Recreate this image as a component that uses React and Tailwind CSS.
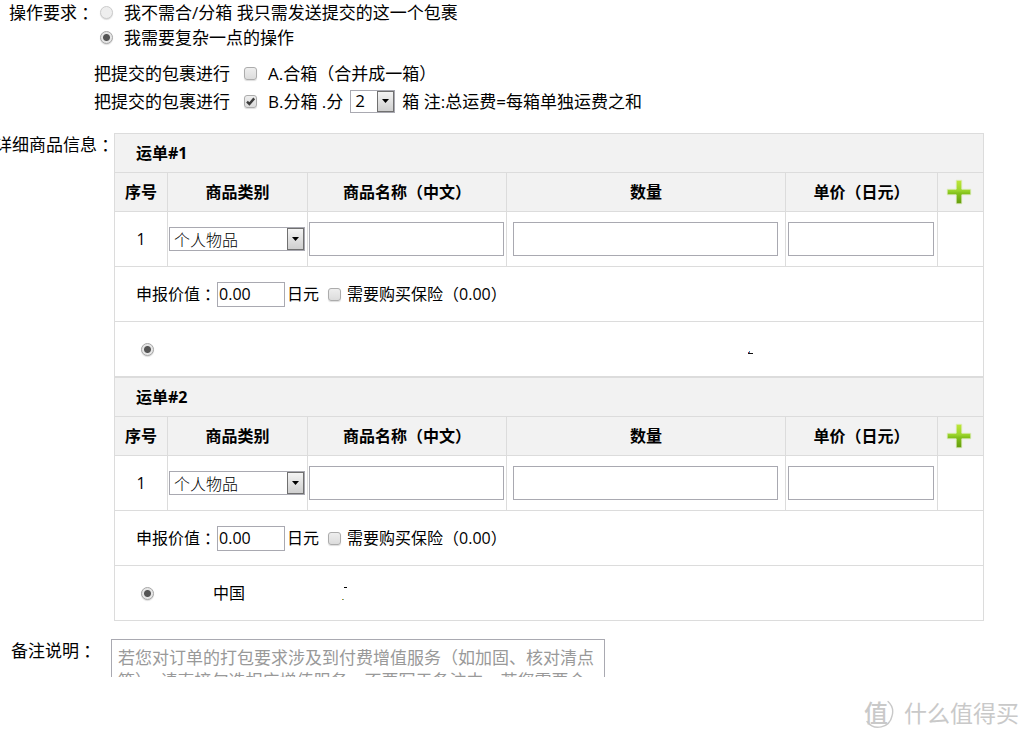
import { useState } from "react";

const inputClass =
  "border border-[#a9a9b1] bg-white outline-none focus:border-gray-500";

// full-width colon that sits in the middle of its box
function Colon() {
  return (
    <span className="inline-block align-top font-['Noto_Sans_CJK_TC',sans-serif]">
      ：
    </span>
  );
}

function Radio({ faded, ...props }) {
  return (
    <input
      type="radio"
      className={`size-[13px] shrink-0 appearance-none rounded-full border shadow-[0_1px_1px_#ddd] ${
        faded ? "border-[#ccc] bg-[#eee]" : "border-[#a8a8a8] bg-[#e6e6e6]"
      } checked:border-[#a8a8a8] checked:bg-[radial-gradient(circle,#555_0,#555_3px,#e6e6e6_4px)]`}
      {...props}
    />
  );
}

function Checkbox(props) {
  return (
    <span className="relative flex size-[13px] shrink-0">
      <input
        type="checkbox"
        className="peer size-[13px] appearance-none rounded-[3px] border border-[#acacac] bg-linear-to-b from-[#eee] to-[#dcdcdc] shadow-[0_1px_1px_#ddd]"
        {...props}
      />
      <svg
        viewBox="0 0 13 13"
        className="pointer-events-none absolute inset-0 hidden size-[13px] peer-checked:block"
      >
        <path
          d="M3 6.6 L5.4 9 L10.2 3.4"
          fill="none"
          stroke="#3c3c3c"
          strokeWidth="2.4"
        />
      </svg>
    </span>
  );
}

function Select({ wrapClass, className, options, ...props }) {
  return (
    <span className={`relative flex ${wrapClass}`}>
      <select
        className={`w-full appearance-none pl-1 leading-5 ${inputClass} ${className}`}
        {...props}
      >
        {options.map((o) => (
          <option key={o}>{o}</option>
        ))}
      </select>
      <span className="pointer-events-none absolute inset-y-px right-px flex w-[17px] items-center justify-center border border-[#707070] bg-linear-to-b from-[#f4f4f4] to-[#cfcfcf]">
        <svg width="7" height="4" viewBox="0 0 7 4">
          <path d="M0 0H7L3.5 4Z" fill="#000" />
        </svg>
      </span>
    </span>
  );
}

function PlusIcon() {
  return (
    <svg width="26" height="26" viewBox="0 0 26 26">
      <defs>
        <linearGradient id="plus" x1="0" y1="0" x2="0" y2="1">
          <stop offset="0" stopColor="#bfe638" />
          <stop offset="0.45" stopColor="#9ad42c" />
          <stop offset="0.55" stopColor="#84c21c" />
          <stop offset="1" stopColor="#649c0c" />
        </linearGradient>
      </defs>
      <path
        d="M10.2 1.2h5.6v9h9v5.6h-9v9h-5.6v-9h-9v-5.6h9z"
        fill="url(#plus)"
        stroke="#dfeec4"
        strokeWidth="0.8"
      />
    </svg>
  );
}

function Waybill({ no, children }) {
  const [items, setItems] = useState([1]);
  const cell = "border border-[#dcdcdc]";

  return (
    <table className="w-full table-fixed border-collapse text-[16px] leading-6">
      <colgroup>
        <col className="w-[53px]" />
        <col className="w-[140px]" />
        <col className="w-[199px]" />
        <col />
        <col className="w-[152px]" />
        <col className="w-[46px]" />
      </colgroup>
      <thead className="bg-[#f2f2f2]">
        <tr className="h-[39px]">
          <th colSpan={6} className={`${cell} pl-[21px] text-left`}>
            运单#{no}
          </th>
        </tr>
        <tr className="h-[39px]">
          <th className={cell}>序号</th>
          <th className={cell}>商品类别</th>
          <th className={cell}>商品名称（中文）</th>
          <th className={cell}>数量</th>
          <th className={cell}>单价（日元）</th>
          <th className={`${cell} pr-1`}>
            <button
              type="button"
              aria-label="添加商品"
              className="mx-auto flex cursor-pointer"
              onClick={() => setItems([...items, items.length + 1])}
            >
              <PlusIcon />
            </button>
          </th>
        </tr>
      </thead>
      <tbody>
        {items.map((n) => (
          <tr key={n} className="h-[55px]">
            <td className={`${cell} text-center`}>{n}</td>
            <td className={`${cell} px-px`}>
              <Select
                wrapClass="w-[136px]"
                className="h-[24px] font-['Noto_Sans_CJK_SC',sans-serif] font-light"
                aria-label="商品类别"
                options={["个人物品"]}
              />
            </td>
            <td className={`${cell} pr-0.5 pl-px`}>
              <input aria-label="商品名称" className={`${inputClass} block h-[34px] w-full`} />
            </td>
            <td className={`${cell} pr-[7px] pl-1.5`}>
              <input aria-label="数量" className={`${inputClass} block h-[34px] w-full`} />
            </td>
            <td className={`${cell} pr-[3px] pl-0.5`}>
              <input aria-label="单价" className={`${inputClass} block h-[34px] w-full`} />
            </td>
            <td className={cell}></td>
          </tr>
        ))}
        <tr className="h-[55px]">
          <td colSpan={6} className={`${cell} pl-[21px]`}>
            <div className="flex items-center">
              <label htmlFor={`value-${no}`}>
                申报价值
                <Colon />
              </label>
              <input
                id={`value-${no}`}
                defaultValue="0.00"
                className={`${inputClass} ml-px h-[25px] w-[68px] pl-px`}
              />
              <span className="ml-0.5">日元</span>
              <label className="ml-[9px] flex items-center gap-[6px]">
                <Checkbox />
                需要购买保险（0.00）
              </label>
            </div>
          </td>
        </tr>
        <tr className="h-[55px]">
          <td colSpan={6} className={`${cell} pl-[26px]`}>
            {children}
          </td>
        </tr>
      </tbody>
    </table>
  );
}

export default function App() {
  return (
    <div className="overflow-hidden bg-white font-['Open_Sans','Noto_Sans_CJK_SC',sans-serif] text-[17px] leading-[26px] text-black">
      {/* Operation */}
      <div className="flex leading-[25px]">
        <span className="w-[94px] shrink-0 text-right">
          操作要求
          <Colon />
        </span>
        <div>
          <label className="flex items-center gap-[11px] pl-1.5">
            <Radio name="operation" faded />
            我不需合/分箱 我只需发送提交的这一个包裹
          </label>
          <label className="flex items-center gap-[11px] pl-1.5">
            <Radio name="operation" defaultChecked />
            我需要复杂一点的操作
          </label>

          <div className="mt-[9px] flex h-7 items-center gap-[14px]">
            <span>把提交的包裹进行</span>
            <label className="flex items-center gap-[11px]">
              <Checkbox />
              A.合箱（合并成一箱）
            </label>
          </div>
          <div className="flex h-7 items-center">
            <span>把提交的包裹进行</span>
            <label className="ml-[14px] flex items-center gap-[11px]">
              <Checkbox defaultChecked />
              B.分箱 .分
            </label>
            <Select
              wrapClass="mx-[7px] w-[45px]"
              className="h-[23px]"
              aria-label="分箱数量"
              defaultValue="2"
              options={["2", "3", "4", "5"]}
            />
            <span>箱 注:总运费=每箱单独运费之和</span>
          </div>
        </div>
      </div>

      {/* Goods */}
      <div className="mt-[18px] flex">
        <span className="flex w-[114px] shrink-0 justify-end leading-6 whitespace-nowrap">
          <span>
            详细商品信息
            <Colon />
          </span>
        </span>
        <div className="mr-[45px] min-w-0 flex-1">
          <Waybill no={1}>
            <div className="flex items-center">
              <Radio name="address-1" aria-label="收货地址" defaultChecked />
              <svg width="6" height="6" viewBox="0 0 6 6" className="mt-2 ml-[594px]">
                <path d="M0 3h5v1H0z" fill="#111" />
                <path d="M1 1h1v2H1z" fill="#4b84b5" />
                <path d="M0 2h1v1H0z" fill="#b33" />
              </svg>
            </div>
          </Waybill>
          <Waybill no={2}>
            <div className="flex items-center">
              <Radio name="address-2" aria-label="收货地址" defaultChecked />
              <span className="ml-[59px]">中国</span>
              <svg width="6" height="14" viewBox="0 0 6 14" className="ml-[97px]">
                <path d="M2 1h3v1H2z" fill="#000" />
                <path d="M0 13h1v1H0z" fill="#c80" />
                <path d="M1 13h1v1H1z" fill="#5ac" />
              </svg>
            </div>
          </Waybill>
        </div>
      </div>

      {/* Remark */}
      <div className="mt-[18px] flex h-[38px] overflow-hidden">
        <label htmlFor="remark" className="w-[111px] shrink-0 pl-[11px] leading-6">
          备注说明
          <Colon />
        </label>
        <textarea
          id="remark"
          rows={4}
          placeholder="若您对订单的打包要求涉及到付费增值服务（如加固、核对清点等），请直接勾选相应增值服务，不要写于备注中，若您需要合箱"
          className={`${inputClass} h-[100px] w-[494px] resize-none overflow-hidden px-1.5 py-1.5 leading-[23px] placeholder:text-[#999]`}
        />
      </div>

      {/* Watermark */}
      <div className="mt-[21px] flex items-center justify-end gap-2.5 pr-[10px] text-[#c9c9c9]">
        <span className="relative flex size-[30px] items-center text-[24px] font-medium leading-[30px]">
          值
          <svg viewBox="0 0 30 30" className="absolute inset-0 size-[30px]" fill="none">
            <path
              d="M24 3.6A14 14 0 0 1 28 18A14 14 0 0 1 3 23.5"
              stroke="currentColor"
              strokeWidth="1.4"
              strokeLinecap="round"
            />
          </svg>
        </span>
        <span className="text-[23px] leading-[30px]">什么值得买</span>
      </div>
    </div>
  );
}
